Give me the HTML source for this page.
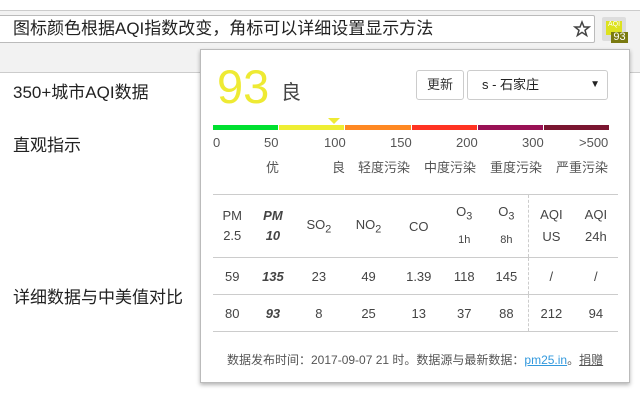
<!DOCTYPE html>
<html><head><meta charset="utf-8"><style>
*{margin:0;padding:0;box-sizing:border-box}
body{width:640px;height:400px;overflow:hidden;background:#fff;font-family:"Liberation Sans","Noto Sans CJK SC",sans-serif;position:relative;color:#222}
.abs{position:absolute}
.bar{left:0;top:10px;width:640px;height:63px;background:#f2f2f2;border-top:1px solid #ccc;border-bottom:1px solid #ccc}
.addr{left:-2px;top:15px;width:597px;height:28px;background:#fff;border:1px solid #bbb;border-radius:2px;font-size:17px;line-height:26px;padding-left:14px;color:#222}
.pop{left:200px;top:49px;width:430px;height:334px;background:#fff;border:1px solid #bbb;box-shadow:0 2px 4px rgba(0,0,0,.3)}
.lbl{font-size:17px;color:#222}
.sm{font-size:13px;color:#555}
td{font-size:13px;color:#444;text-align:center}
</style></head><body>
<div class="abs bar"></div>
<div class="abs addr">图标颜色根据AQI指数改变，角标可以详细设置显示方法</div>
<svg class="abs" style="left:573px;top:20px" width="18" height="18" viewBox="0 0 18 18"><path d="M9 2l2 5h5l-4 3.3 1.6 5.2L9 12.4 4.4 15.5 6 10.3 2 7h5z" fill="none" stroke="#444" stroke-width="1.5"/></svg>
<div class="abs" style="left:602px;top:17px;width:24px;height:24px;background:#ddd;border-radius:2px"></div>
<div class="abs" style="left:606px;top:21px;width:16px;height:14px;background:#dde21f;font-size:7px;color:#fff;text-align:center">AQI</div>
<div class="abs" style="left:611px;top:32px;width:17px;height:11px;background:#7a7a10;color:#fff;font-size:11px;line-height:11px;text-align:center">93</div>
<div class="abs lbl" style="left:13px;top:78px">350+城市AQI数据</div>
<div class="abs lbl" style="left:13px;top:131px">直观指示</div>
<div class="abs lbl" style="left:13px;top:283px">详细数据与中美值对比</div>
<div class="abs pop">
 <div class="abs" style="left:16px;top:9px;font-size:47px;line-height:56px;color:#eeea33">93</div>
 <div class="abs" style="left:80px;top:26px;font-size:20px;color:#444">良</div>
 <div class="abs" style="left:215px;top:20px;width:48px;height:30px;border:1px solid #ccc;border-radius:3px;font-size:13px;line-height:28px;text-align:center;color:#333">更新</div>
 <div class="abs" style="left:266px;top:20px;width:141px;height:30px;border:1px solid #ccc;border-radius:3px;font-size:13px;line-height:28px;padding-left:14px;color:#222">s - 石家庄<span style="position:absolute;right:7px;top:0;font-size:10px">▼</span></div>
 <div class="abs" style="left:127px;top:68px;width:0;height:0;border-left:6px solid transparent;border-right:6px solid transparent;border-top:6px solid #eeea33"></div>
 <div class="abs" style="left:12px;top:75px;width:396px;height:5px;display:flex;gap:1px">
  <div style="flex:1;background:#00e030"></div><div style="flex:1;background:#eeee33"></div><div style="flex:1;background:#ff8822"></div><div style="flex:1;background:#ff3322"></div><div style="flex:1;background:#991155"></div><div style="flex:1;background:#7a1530"></div>
 </div>
 <div class="abs sm" style="left:12px;top:85px">0</div>
 <div class="abs sm" style="left:63px;top:85px">50</div>
 <div class="abs sm" style="left:123px;top:85px">100</div>
 <div class="abs sm" style="left:189px;top:85px">150</div>
 <div class="abs sm" style="left:255px;top:85px">200</div>
 <div class="abs sm" style="left:321px;top:85px">300</div>
 <div class="abs sm" style="left:378px;top:85px">&gt;500</div>
 <div class="abs sm" style="left:65px;top:107px">优</div>
 <div class="abs sm" style="left:131px;top:107px">良</div>
 <div class="abs sm" style="left:157px;top:107px">轻度污染</div>
 <div class="abs sm" style="left:223px;top:107px">中度污染</div>
 <div class="abs sm" style="left:289px;top:107px">重度污染</div>
 <div class="abs sm" style="left:355px;top:107px">严重污染</div>
 <table class="abs" style="left:12px;top:144px;width:405px;border-collapse:collapse">
  <tr style="height:63px;border-top:1px solid #ccc;border-bottom:1px solid #ccc"><td style="line-height:20px">PM<br>2.5</td><td style="line-height:20px;font-weight:bold;font-style:italic">PM<br>10</td><td>SO<sub>2</sub></td><td>NO<sub>2</sub></td><td>CO</td><td style="line-height:22px">O<sub>3</sub><br><span style="font-size:11px">1h</span></td><td style="line-height:22px">O<sub>3</sub><br><span style="font-size:11px">8h</span></td><td style="border-left:1px dashed #ccc;line-height:22px">AQI<br>US</td><td style="line-height:22px">AQI<br>24h</td></tr>
  <tr style="height:37px;border-bottom:1px solid #ccc"><td>59</td><td style="font-weight:bold;font-style:italic">135</td><td>23</td><td>49</td><td>1.39</td><td>118</td><td>145</td><td style="border-left:1px dashed #ccc">/</td><td>/</td></tr>
  <tr style="height:37px;border-bottom:1px solid #ccc"><td>80</td><td style="font-weight:bold;font-style:italic">93</td><td>8</td><td>25</td><td>13</td><td>37</td><td>88</td><td style="border-left:1px dashed #ccc">212</td><td>94</td></tr>
 </table>
 <div class="abs" style="left:26px;top:301px;font-size:12px;color:#555;white-space:nowrap">数据发布时间：2017-09-07 21 时。数据源与最新数据：<span style="color:#3399dd;text-decoration:underline">pm25.in</span>。<span style="text-decoration:underline">捐赠</span></div>
</div>
</body></html>
